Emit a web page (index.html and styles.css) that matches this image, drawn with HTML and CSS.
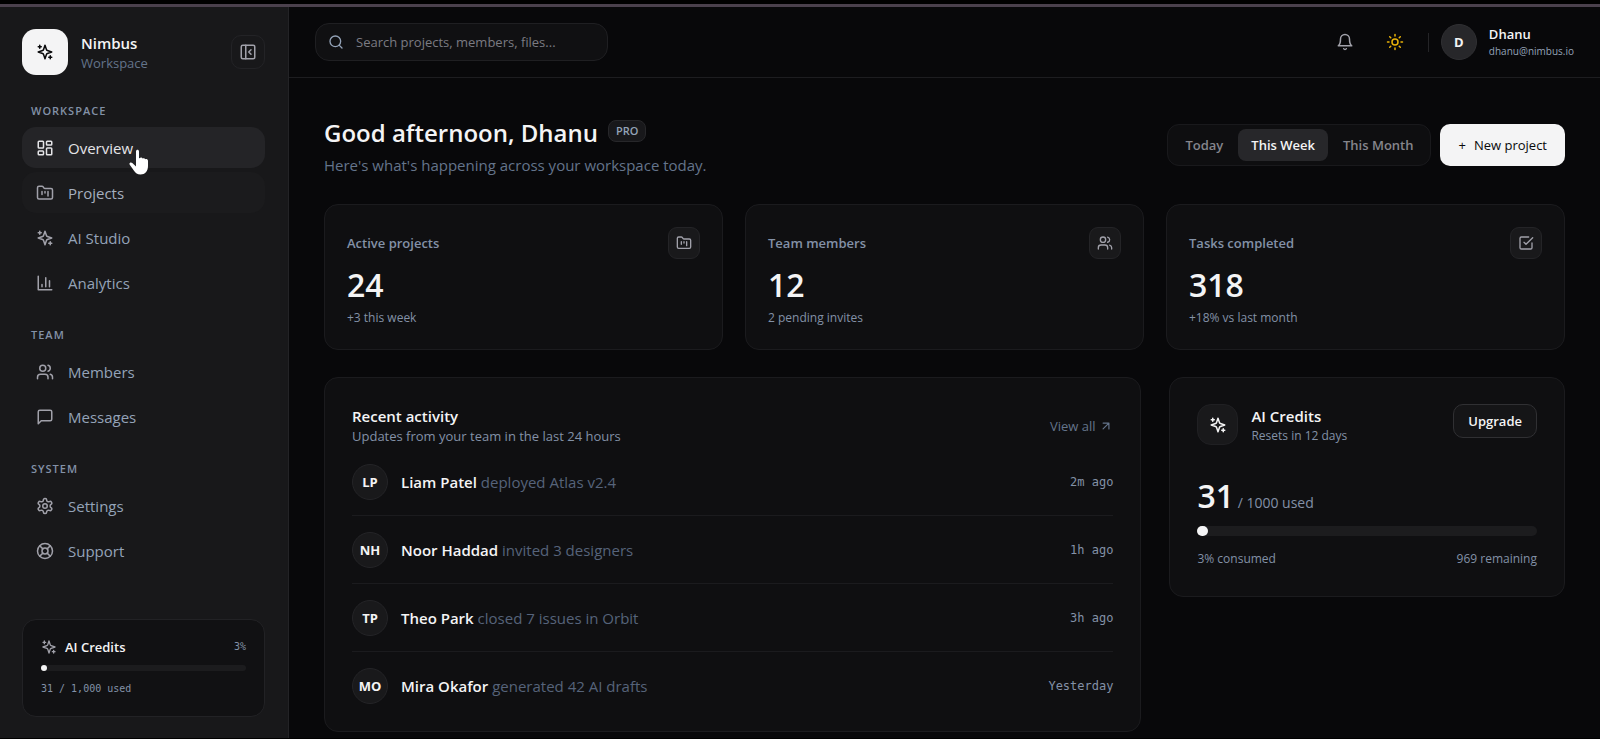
FILE: index.html
```html
<!DOCTYPE html>
<html lang="en">
<head>
<meta charset="utf-8">
<meta name="viewport" content="width=device-width, initial-scale=1">
<title>Nimbus Workspace</title>
<link rel="stylesheet" href="styles.css">
</head>
<body>
<svg class="sprite" aria-hidden="true">
  <symbol id="i-sparkles" viewBox="0 0 24 24"><path d="m12 3-1.9 5.8a2 2 0 0 1-1.3 1.3L3 12l5.8 1.9a2 2 0 0 1 1.3 1.3L12 21l1.9-5.8a2 2 0 0 1 1.3-1.3L21 12l-5.8-1.9a2 2 0 0 1-1.3-1.3ZM5 3v4M19 17v4M3 5h4M17 19h4"/></symbol>
  <symbol id="i-panel" viewBox="0 0 24 24"><rect x="3" y="3" width="18" height="18" rx="2"/><path d="M9 3v18M16 15l-3-3 3-3"/></symbol>
  <symbol id="i-dashboard" viewBox="0 0 24 24"><rect x="3" y="3" width="7" height="9" rx="1"/><rect x="14" y="3" width="7" height="5" rx="1"/><rect x="14" y="12" width="7" height="9" rx="1"/><rect x="3" y="16" width="7" height="5" rx="1"/></symbol>
  <symbol id="i-folder" viewBox="0 0 24 24"><path d="M4 20h16a2 2 0 0 0 2-2V8a2 2 0 0 0-2-2h-7.930a2 2 0 0 1-1.660-.9l-.820-1.200A2 2 0 0 0 7.930 3H4a2 2 0 0 0-2 2v13c0 1.100.9 2 2 2ZM8 10v4M12 10v2M16 10v6"/></symbol>
  <symbol id="i-chart" viewBox="0 0 24 24"><path d="M3 3v18h18M18 17V9M13 17V5M8 17v-3"/></symbol>
  <symbol id="i-users" viewBox="0 0 24 24"><path d="M16 21v-2a4 4 0 0 0-4-4H6a4 4 0 0 0-4 4v2"/><circle cx="9" cy="7" r="4"/><path d="M22 21v-2a4 4 0 0 0-3-3.870M16 3.130a4 4 0 0 1 0 7.750"/></symbol>
  <symbol id="i-message" viewBox="0 0 24 24"><path d="M21 15a2 2 0 0 1-2 2H7l-4 4V5a2 2 0 0 1 2-2h14a2 2 0 0 1 2 2z"/></symbol>
  <symbol id="i-settings" viewBox="0 0 24 24"><path d="M12.220 2h-.440a2 2 0 0 0-2 2v.180a2 2 0 0 1-1 1.730l-.430.250a2 2 0 0 1-2 0l-.150-.080a2 2 0 0 0-2.730.730l-.220.380a2 2 0 0 0 .730 2.730l.150.100a2 2 0 0 1 1 1.720v.510a2 2 0 0 1-1 1.740l-.150.090a2 2 0 0 0-.730 2.730l.220.380a2 2 0 0 0 2.730.730l.150-.080a2 2 0 0 1 2 0l.430.250a2 2 0 0 1 1 1.730V20a2 2 0 0 0 2 2h.440a2 2 0 0 0 2-2v-.180a2 2 0 0 1 1-1.730l.430-.250a2 2 0 0 1 2 0l.150.080a2 2 0 0 0 2.730-.730l.220-.390a2 2 0 0 0-.730-2.730l-.150-.080a2 2 0 0 1-1-1.740v-.500a2 2 0 0 1 1-1.740l.150-.090a2 2 0 0 0 .730-2.730l-.220-.380a2 2 0 0 0-2.730-.730l-.150.080a2 2 0 0 1-2 0l-.430-.250a2 2 0 0 1-1-1.730V4a2 2 0 0 0-2-2z"/><circle cx="12" cy="12" r="3"/></symbol>
  <symbol id="i-support" viewBox="0 0 24 24"><circle cx="12" cy="12" r="10"/><circle cx="12" cy="12" r="4"/><path d="m4.930 4.930 4.240 4.240M14.830 9.170l4.240-4.240M14.830 14.830l4.240 4.240M9.170 14.830l-4.240 4.240"/></symbol>
  <symbol id="i-search" viewBox="0 0 24 24"><circle cx="11" cy="11" r="8"/><path d="m21 21-4.300-4.300"/></symbol>
  <symbol id="i-bell" viewBox="0 0 24 24"><path d="M6 8a6 6 0 0 1 12 0c0 7 3 9 3 9H3s3-2 3-9M10.300 21a1.940 1.940 0 0 0 3.400 0"/></symbol>
  <symbol id="i-sun" viewBox="0 0 24 24"><circle cx="12" cy="12" r="4"/><path d="M12 2v2M12 20v2M4.930 4.930l1.410 1.410M17.660 17.660l1.410 1.410M2 12h2M20 12h2M6.340 17.660l-1.410 1.410M19.070 4.930l-1.410 1.410"/></symbol>
  <symbol id="i-check" viewBox="0 0 24 24"><path d="m9 11 3 3L22 4M21 12v7a2 2 0 0 1-2 2H5a2 2 0 0 1-2-2V5a2 2 0 0 1 2-2h11"/></symbol>
  <symbol id="i-arrow" viewBox="0 0 24 24"><path d="M7 7h10v10M7 17 17 7"/></symbol>
</svg>

<div class="app">
  <aside class="sidebar">
    <div class="brand">
      <span class="brand-logo"><svg class="icon icon-18"><use href="#i-sparkles"/></svg></span>
      <div class="brand-text">
        <span class="brand-name">Nimbus</span>
        <span class="brand-sub">Workspace</span>
      </div>
      <button class="collapse" type="button" aria-label="Collapse sidebar"><svg class="icon icon-18"><use href="#i-panel"/></svg></button>
    </div>

    <nav class="nav" aria-label="Main">
      <section class="nav-group">
        <h2 class="nav-title">Workspace</h2>
        <a class="nav-link active" href="#overview"><svg class="icon icon-18"><use href="#i-dashboard"/></svg>Overview</a>
        <a class="nav-link hovered" href="#projects"><svg class="icon icon-18"><use href="#i-folder"/></svg>Projects</a>
        <a class="nav-link" href="#studio"><svg class="icon icon-18"><use href="#i-sparkles"/></svg>AI Studio</a>
        <a class="nav-link" href="#analytics"><svg class="icon icon-18"><use href="#i-chart"/></svg>Analytics</a>
      </section>
      <section class="nav-group">
        <h2 class="nav-title">Team</h2>
        <a class="nav-link" href="#members"><svg class="icon icon-18"><use href="#i-users"/></svg>Members</a>
        <a class="nav-link" href="#messages"><svg class="icon icon-18"><use href="#i-message"/></svg>Messages</a>
      </section>
      <section class="nav-group">
        <h2 class="nav-title">System</h2>
        <a class="nav-link" href="#settings"><svg class="icon icon-18"><use href="#i-settings"/></svg>Settings</a>
        <a class="nav-link" href="#support"><svg class="icon icon-18"><use href="#i-support"/></svg>Support</a>
      </section>
    </nav>

    <div class="usage">
      <div class="usage-head">
        <svg class="icon icon-16"><use href="#i-sparkles"/></svg>
        <span class="usage-name">AI Credits</span>
        <span class="usage-pct">3%</span>
      </div>
      <div class="bar bar-small"><span class="bar-fill" style="width:3%"></span></div>
      <span class="usage-note">31 / 1,000 used</span>
    </div>
  </aside>

  <div class="content">
    <header class="topbar">
      <label class="search">
        <svg class="icon icon-16"><use href="#i-search"/></svg>
        <input type="search" placeholder="Search projects, members, files..." aria-label="Search projects, members, files">
      </label>
      <div class="top-actions">
        <button class="icon-btn" type="button" aria-label="Notifications"><svg class="icon icon-18"><use href="#i-bell"/></svg></button>
        <button class="icon-btn sun" type="button" aria-label="Toggle theme"><svg class="icon icon-18"><use href="#i-sun"/></svg></button>
        <div class="user">
          <span class="user-avatar">D</span>
          <div class="user-text">
            <span class="user-name">Dhanu</span>
            <span class="user-mail">dhanu@nimbus.io</span>
          </div>
        </div>
      </div>
    </header>

    <main class="main">
      <div class="hero">
        <div>
          <div class="hero-title"><h1>Good afternoon, Dhanu</h1><span class="badge">PRO</span></div>
          <p class="hero-sub">Here's what's happening across your workspace today.</p>
        </div>
        <div class="hero-actions">
          <div class="segmented">
            <button class="seg" type="button">Today</button>
            <button class="seg seg-on" type="button" aria-pressed="true">This Week</button>
            <button class="seg" type="button">This Month</button>
          </div>
          <button class="primary" type="button"><span class="plus">+</span>New project</button>
        </div>
      </div>

      <div class="stats">
        <article class="card">
          <div class="card-head"><h2>Active projects</h2><span class="card-icon"><svg class="icon icon-16"><use href="#i-folder"/></svg></span></div>
          <p class="figure">24</p>
          <p class="card-note">+3 this week</p>
        </article>
        <article class="card">
          <div class="card-head"><h2>Team members</h2><span class="card-icon"><svg class="icon icon-16"><use href="#i-users"/></svg></span></div>
          <p class="figure">12</p>
          <p class="card-note">2 pending invites</p>
        </article>
        <article class="card">
          <div class="card-head"><h2>Tasks completed</h2><span class="card-icon"><svg class="icon icon-16"><use href="#i-check"/></svg></span></div>
          <p class="figure">318</p>
          <p class="card-note">+18% vs last month</p>
        </article>
      </div>

      <div class="panels">
        <section class="panel">
          <div class="panel-head">
            <div><h2>Recent activity</h2><p class="panel-sub">Updates from your team in the last 24 hours</p></div>
            <a class="view-all" href="#activity">View all <svg class="icon icon-14"><use href="#i-arrow"/></svg></a>
          </div>
          <ul class="feed">
            <li><span class="avatar">LP</span><p><strong>Liam Patel</strong> deployed Atlas v2.4</p><time>2m ago</time></li>
            <li><span class="avatar">NH</span><p><strong>Noor Haddad</strong> invited 3 designers</p><time>1h ago</time></li>
            <li><span class="avatar">TP</span><p><strong>Theo Park</strong> closed 7 issues in Orbit</p><time>3h ago</time></li>
            <li><span class="avatar">MO</span><p><strong>Mira Okafor</strong> generated 42 AI drafts</p><time>Yesterday</time></li>
          </ul>
        </section>

        <section class="panel credits">
          <div class="credits-head">
            <span class="credits-icon"><svg class="icon icon-18"><use href="#i-sparkles"/></svg></span>
            <div class="credits-text"><h2>AI Credits</h2><p class="panel-sub small">Resets in 12 days</p></div>
            <button class="upgrade" type="button">Upgrade</button>
          </div>
          <p class="credits-figure"><strong>31</strong> / 1000 used</p>
          <div class="bar"><span class="bar-fill" style="width:3%"></span></div>
          <div class="credits-foot"><span>3% consumed</span><span>969 remaining</span></div>
        </section>
      </div>
    </main>
  </div>
</div>

<svg class="cursor" viewBox="0 0 20 26" aria-hidden="true"><path d="M7 2.500C7 .2 10 .2 10 2.500V9l.8.2c.5-1 2.300-.8 2.700.4.9-.8 2.400-.4 2.700.7 1-.6 2.800 0 2.800 1.700V17c0 5-3 8.500-7.500 8.500-3.200 0-5-1.300-6.500-3.700L.6 15.500C-.2 13.800 2 12.600 3.300 14L7 17.500Z"/></svg>
</body>
</html>
```

FILE: styles.css
```css
* { box-sizing: border-box; }

body {
  margin: 0;
  background: #08080a;
  color: #f4f4f5;
  font-family: "Open Sans", "Noto Sans", sans-serif;
  font-size: 15px;
  line-height: 20px;
}

h1, h2, p, ul { margin: 0; padding: 0; }
h2 { font-size: 15px; font-weight: 600; }
button, input { font: inherit; color: inherit; }
button { padding: 0; border: 0; background: none; cursor: pointer; }
a { color: inherit; text-decoration: none; }

.sprite { position: absolute; width: 0; height: 0; }
.icon { flex: none; fill: none; stroke: currentColor; stroke-width: 2; stroke-linecap: round; stroke-linejoin: round; }
.icon-14 { width: 14px; height: 14px; }
.icon-16 { width: 16px; height: 16px; }
.icon-18 { width: 18px; height: 18px; }

.app {
  display: flex;
  min-height: calc(100vh - 4px);
  margin-top: 4px;
  border-top: 3px solid #4a404c;
  border-bottom: 1px solid #000;
  outline: 4px solid #000;
}

/* Sidebar */
.sidebar {
  display: flex;
  flex-direction: column;
  flex: none;
  width: 289px;
  padding: 22px 23px 21px 22px;
  background: #18181a;
  border-right: 1px solid #232326;
}
.brand { display: flex; align-items: center; gap: 13px; }
.brand-logo {
  display: grid;
  place-items: center;
  width: 46px;
  height: 46px;
  border-radius: 14px;
  background: #f4f4f5;
  color: #09090b;
}
.brand-text { display: flex; flex-direction: column; flex: 1; padding-top: 2px; }
.brand-name { font-weight: 600; }
.brand-sub { font-size: 13px; color: #64748b; }
.collapse {
  display: grid;
  place-items: center;
  width: 34px;
  height: 34px;
  border: 1px solid #232326;
  border-radius: 10px;
  color: #a1a1aa;
}
.nav { display: flex; flex-direction: column; gap: 21px; padding-top: 25px; }
.nav-group { display: flex; flex-direction: column; gap: 4px; }
.nav-title {
  padding: 1px 9px 3px;
  font-size: 11px;
  line-height: 19px;
  letter-spacing: 1px;
  text-transform: uppercase;
  color: #8391a7;
}
.nav-link {
  display: flex;
  align-items: center;
  gap: 14px;
  height: 41px;
  padding: 0 14px;
  border-radius: 14px;
  color: #94a3b8;
}
.nav-link .icon { color: #a1a1aa; }
.nav-link.active { background: #242427; }
.nav-link.active, .nav-link.active .icon { color: #e4e4e7; }
.nav-link.hovered { background: #1b1b1d; color: #a5afbf; }
.usage {
  display: flex;
  flex-direction: column;
  margin-top: auto;
  padding: 17px 18px;
  border: 1px solid #222225;
  border-radius: 14px;
  background: #111113;
}
.usage-head { display: flex; align-items: center; gap: 8px; }
.usage-head .icon { color: #a1a1aa; }
.usage-name { flex: 1; font-size: 13px; font-weight: 600; }
.usage-pct, .usage-note { font-family: "DejaVu Sans Mono", monospace; font-size: 10px; color: #8391a7; }
.usage-note { padding-top: 8px; }

.bar { display: flex; height: 10px; border-radius: 5px; background: #1c1c1e; }
.bar-fill { min-width: 6px; border-radius: 5px; background: #f4f4f5; }
.bar-small { height: 6px; margin-top: 8px; }

/* Top bar */
.content { display: flex; flex-direction: column; flex: 1; min-width: 0; }
.topbar {
  display: flex;
  align-items: center;
  justify-content: space-between;
  height: 71px;
  padding: 0 26px;
  border-bottom: 1px solid #1d1d20;
}
.search {
  display: flex;
  align-items: center;
  gap: 12px;
  width: 293px;
  height: 38px;
  padding: 0 12px;
  border: 1px solid #1f1f22;
  border-radius: 14px;
  background: #101012;
  color: #94a3b8;
}
.search input { flex: 1; min-width: 0; padding: 0; border: 0; outline: 0; background: none; font-size: 13px; }
.search input::placeholder { color: #7b7b82; opacity: 1; }
.top-actions { display: flex; align-items: center; gap: 16px; }
.icon-btn { display: grid; place-items: center; width: 34px; height: 34px; color: #a1a1aa; }
.sun { color: #eab308; }
.user { display: flex; align-items: center; gap: 12px; }
.user::before { content: ""; width: 1px; height: 19px; background: #242427; }
.user-avatar {
  display: grid;
  place-items: center;
  width: 36px;
  height: 36px;
  border: 1px solid #303033;
  border-radius: 50%;
  background: #27272a;
  font-size: 13px;
  font-weight: 700;
}
.user-text { display: flex; flex-direction: column; }
.user-name { font-size: 13px; line-height: 17px; font-weight: 600; }
.user-mail { font-size: 10px; line-height: 16px; color: #94a3b8; }

/* Main */
.main { display: flex; flex-direction: column; padding: 35px 35px 5px 35px; }
.hero { display: flex; align-items: center; justify-content: space-between; gap: 24px; padding-bottom: 27px; }
.hero-title { display: flex; align-items: center; gap: 10px; }
.hero-title h1 { font-size: 25px; line-height: 40px; font-weight: 600; }
.badge {
  margin-bottom: 4px;
  padding: 0 7px;
  border: 1px solid #27272a;
  border-radius: 8px;
  background: #18181b;
  color: #94a3b8;
  font-size: 11px;
  line-height: 20px;
  font-weight: 600;
}
.hero-sub { line-height: 24px; color: #64748b; }
.hero-title h1 { font-size: 24px; }
.hero-actions { display: flex; gap: 9px; }
.segmented {
  display: flex;
  gap: 2px;
  padding: 4px;
  border: 1px solid #19191c;
  border-radius: 12px;
  background: #0e0e10;
}
.seg { height: 32px; padding: 0 13px; border-radius: 8px; font-size: 13px; font-weight: 600; color: #85858c; }
.seg-on { background: #27272a; color: #f4f4f5; }
.primary {
  display: flex;
  align-items: center;
  gap: 8px;
  height: 42px;
  padding: 0 18px;
  border-radius: 10px;
  background: #f4f4f5;
  color: #09090b;
  font-size: 13px;
  font-weight: 500;
}

.stats { display: grid; grid-template-columns: repeat(3, minmax(0, 1fr)); gap: 22px; }
.card { padding: 22px 22px 21px; border: 1px solid #1b1b1e; border-radius: 14px; background: #0f0f11; }
.card-head { display: flex; align-items: center; justify-content: space-between; }
.card-head h2 { font-size: 13px; color: #8391a7; }
.card-icon {
  display: grid;
  place-items: center;
  width: 32px;
  height: 32px;
  border: 1px solid #242427;
  border-radius: 9px;
  background: #19191b;
  color: #a1a1aa;
}
.figure { padding-top: 6px; font-size: 32px; line-height: 40px; font-weight: 600; }
.card-note { padding-top: 3px; font-size: 12px; color: #8391a7; }

.panels { display: grid; grid-template-columns: minmax(0, 31fr) minmax(0, 15fr); align-items: start; gap: 28px; padding-top: 27px; }
.panel { padding: 26px 27px 27px; border: 1px solid #1b1b1e; border-radius: 14px; background: #0f0f11; }
.panel-head { display: flex; align-items: center; justify-content: space-between; padding: 2px 0 8px; }
.panel-sub { font-size: 13px; color: #8391a7; }
.small { font-size: 12px; }
.view-all { display: flex; align-items: center; gap: 4px; font-size: 13px; font-weight: 500; color: #64748b; }
.feed { list-style: none; }
.feed li { display: flex; align-items: center; gap: 13px; padding: 16px 0 15px; border-top: 1px solid #1b1b1e; }
.feed li:first-child { padding-top: 10px; border-top: 0; }
.feed li:last-child { padding-bottom: 0; }
.feed p { flex: 1; color: #56637a; }
.feed strong { color: #f4f4f5; font-weight: 600; }
.feed time { font-family: "DejaVu Sans Mono", monospace; font-size: 12px; color: #8391a7; }
.avatar {
  display: grid;
  place-items: center;
  width: 36px;
  height: 36px;
  border: 1px solid #242427;
  border-radius: 50%;
  background: #19191b;
  font-size: 13px;
  font-weight: 700;
}

.credits-head { display: flex; align-items: flex-start; gap: 13px; }
.credits-icon {
  display: grid;
  place-items: center;
  width: 41px;
  height: 41px;
  border: 1px solid #202023;
  border-radius: 14px;
  background: #19191b;
}
.credits-text { flex: 1; padding-top: 2px; }
.upgrade {
  height: 34px;
  padding: 0 14px;
  border: 1px solid #303033;
  border-radius: 10px;
  background: #151517;
  font-size: 13px;
  font-weight: 600;
}
.credits-figure { padding: 30px 0 3px; color: #8391a7; font-size: 14px; line-height: 40px; }
.credits-figure strong { font-size: 32px; font-weight: 600; color: #f4f4f5; }
.credits-foot { display: flex; justify-content: space-between; padding-top: 13px; font-size: 12px; color: #8391a7; }

/* Pointer floating over the page */
.cursor { position: absolute; left: 129px; top: 149px; width: 20px; height: 26px; fill: #fff; pointer-events: none; }
```
